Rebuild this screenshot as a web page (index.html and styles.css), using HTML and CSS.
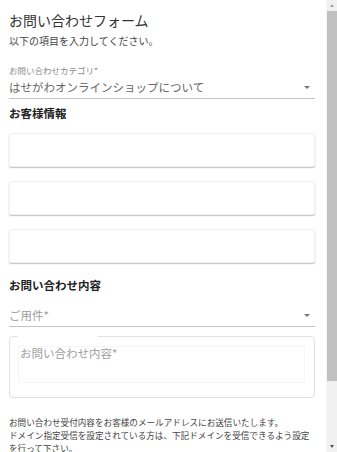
FILE: index.html
```html
<!DOCTYPE html>
<html lang="ja">
<head>
    <meta charset="UTF-8">
    <meta name="viewport" content="width=device-width, initial-scale=1.0">
    <title>お問い合わせフォーム</title>
    <link rel="stylesheet" href="styles.css">
</head>
<body>
    <div class="frame">
        <div class="page">
            <h1 class="title">お問い合わせフォーム</h1>
            <p class="lead">以下の項目を入力してください。</p>

            <div class="select">
                <div class="select-label">お問い合わせカテゴリ*</div>
                <div class="select-row">
                    <span class="select-value">はせがわオンラインショップについて</span>
                    <span class="arrow"></span>
                </div>
            </div>

            <h2 class="section">お客様情報</h2>
            <div class="fields">
                <div class="solo"><input type="text"></div>
                <div class="solo"><input type="text"></div>
                <div class="solo"><input type="text"></div>
            </div>

            <h2 class="section section-2">お問い合わせ内容</h2>
            <div class="select select-2">
                <div class="select-row">
                    <span class="select-placeholder">ご用件*</span>
                    <span class="arrow"></span>
                </div>
            </div>

            <fieldset class="outlined">
                <legend></legend>
                <div class="textarea">お問い合わせ内容*</div>
            </fieldset>

            <p class="note">お問い合わせ受付内容をお客様のメールアドレスにお送信いたします。<br>ドメイン指定受信を設定されている方は、下記ドメインを受信できるよう設定を行って下さい。</p>
        </div>
        <!-- スクロールバー -->
        <div class="scrollbar">
            <div class="sb-btn"><span class="sb-up"></span></div>
            <div class="sb-track">
                <div class="sb-thumb"></div>
            </div>
            <div class="sb-btn"><span class="sb-down"></span></div>
        </div>
    </div>
</body>
</html>
```

FILE: styles.css
```css
*{
    margin: 0;
    padding: 0;
    box-sizing: border-box;
}
html,body{
    height: 100%;
    overflow: hidden;
    background: #fff;
}
body{
    font-family: "Noto Sans CJK JP", "Noto Sans", sans-serif;
    color: #333;
}
.frame{
    display: flex;
    height: 100%;
}
.page{
    flex: 1;
    min-width: 0;
    overflow: hidden;
    padding: 10px 10px 0 9px;
}
/* スクロールバー */
.scrollbar{
    width: 11px;
    display: flex;
    flex-direction: column;
    background: #f1f1f1;
    border-left: 1px solid #f6f6f6;
}
.sb-btn{
    height: 11px;
    display: flex;
    align-items: center;
    justify-content: center;
}
.sb-up{
    border-left: 2.5px solid transparent;
    border-right: 2.5px solid transparent;
    border-bottom: 3px solid #a3a3a3;
}
.sb-down{
    border-left: 2.5px solid transparent;
    border-right: 2.5px solid transparent;
    border-top: 3px solid #505050;
}
.sb-track{
    flex: 1;
}
.sb-thumb{
    height: 370px;
    background: #c1c1c1;
}
.title{
    font-size: 14px;
    font-weight: normal;
    line-height: 20px;
    color: #333;
}
.lead{
    margin-top: 4px;
    font-size: 10px;
    line-height: 14px;
    color: #444;
}
.select{
    margin-top: 16px;
    margin-right: 1px;
}
.select-label{
    font-size: 8.5px;
    line-height: 12px;
    color: #8a8a8a;
}
.select-row{
    display: flex;
    align-items: center;
    margin-top: 2px;
    padding-bottom: 2px;
    border-bottom: 1px solid #c4c4c4;
    font-size: 11.5px;
    line-height: 18px;
}
.select-value{
    flex: 1;
    color: #666;
}
.select-placeholder{
    flex: 1;
    color: #9e9e9e;
}
.arrow{
    width: 0;
    height: 0;
    margin-right: 5px;
    border-left: 3.5px solid transparent;
    border-right: 3.5px solid transparent;
    border-top: 3.5px solid #757575;
}
.section{
    margin-top: 6px;
    font-size: 11.5px;
    line-height: 16px;
    font-weight: bold;
    color: #222;
}
.section-2{
    margin-top: 14px;
}
.select-2{
    margin-top: 13px;
}
.fields{
    display: flex;
    flex-direction: column;
    gap: 14px;
    margin-top: 12px;
    margin-right: 1px;
}
.solo{
    height: 34px;
    border-radius: 2px;
    border: 1px solid #f0f0f0;
    box-shadow: 0 1px 1px 0 rgba(0,0,0,.18), 0 1px 2px 0 rgba(0,0,0,.08);
    background: #fff;
}
.solo input{
    width: 100%;
    height: 100%;
    border: none;
    outline: none;
    background: transparent;
}
.outlined{
    margin-top: 9px;
    margin-right: 1px;
    height: 62px;
    border: 1px solid #e0e0e0;
    border-radius: 4px;
    padding: 0 9px 0 8px;
}
.outlined legend{
    width: 80px;
    height: 0;
    padding: 0;
    font-size: 0;
}
.textarea{
    margin-top: 9px;
    height: 37px;
    border: 1px solid #f6f6f6;
    padding-left: 1px;
    font-size: 11.5px;
    line-height: 12px;
    color: #9e9e9e;
}
.note{
    margin-top: 18px;
    font-size: 8.6px;
    line-height: 13px;
    color: #444;
}
```
